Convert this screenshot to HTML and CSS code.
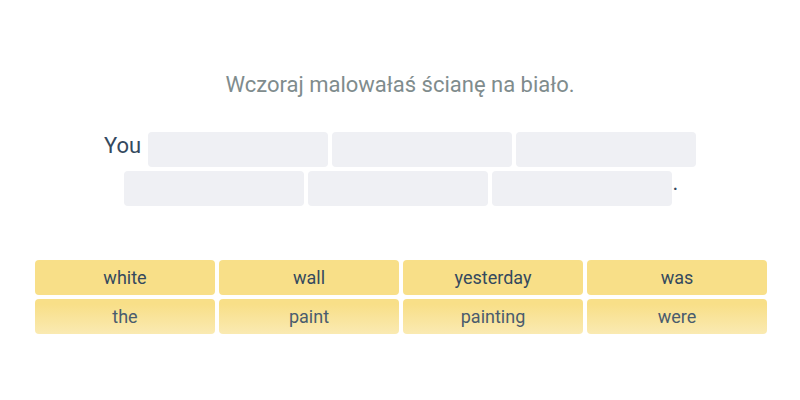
FILE: index.html
```html
<!DOCTYPE html>
<html lang="pl">
<head>
  <meta charset="UTF-8" />
  <title>Sentence Builder</title>
  <link rel="stylesheet" href="styles.css">
</head>
<body>
  <div class="exercise">
    <p class="prompt">Wczoraj malowałaś ścianę na biało.</p>

    <div class="sentence">
      <span class="word-fixed you">You</span>
      <span class="slot"></span>
      <span class="slot"></span>
      <span class="slot"></span>
      <span class="slot"></span>
      <span class="slot"></span>
      <span class="slot"></span>
      <span class="word-fixed">.</span>
    </div>

    <div class="word-bank">
      <button class="tile">white</button>
      <button class="tile">wall</button>
      <button class="tile">yesterday</button>
      <button class="tile">was</button>
      <button class="tile fade">the</button>
      <button class="tile fade">paint</button>
      <button class="tile fade">painting</button>
      <button class="tile fade">were</button>
    </div>
  </div>
</body>
</html>
```

FILE: styles.css
```css
* {
  box-sizing: border-box;
}

body {
  margin: 0;
  font-family: Roboto, 'Noto Sans', sans-serif;
  background: #fff;
  color: #34495e;
}

.exercise {
  width: 800px;
  padding-top: 70px;
}

.prompt {
  margin: 0;
  text-align: center;
  font-size: 22px;
  line-height: 30px;
  color: #7f8c8d;
}

.sentence {
  width: 600px;
  margin: 32px auto 0;
  display: flex;
  flex-wrap: wrap;
  justify-content: center;
  align-items: center;
  gap: 4px;
}

.word-fixed {
  font-size: 22px;
  line-height: 35px;
  color: #34495e;
}

.you {
  margin-right: 3px;
  position: relative;
  top: -4px;
}

.slot {
  width: 180px;
  height: 35px;
  border-radius: 4px;
  background: #eff0f4;
}

.slot + .word-fixed {
  position: relative;
  top: -6px;
  margin-left: -3px;
  margin-right: -2px;
}

.word-bank {
  margin: 54px 0 0 35px;
  display: grid;
  grid-template-columns: repeat(4, 180px);
  gap: 4px;
}

.tile {
  height: 35px;
  padding: 0;
  border: none;
  border-radius: 4px;
  background: #f8df88;
  font-family: Roboto, 'Noto Sans', sans-serif;
  font-size: 18px;
  color: #34495e;
}

.tile.fade {
  background: linear-gradient(to bottom, #f8df88 15%, #faeab2 100%);
  color: #4a5c6e;
}
```
